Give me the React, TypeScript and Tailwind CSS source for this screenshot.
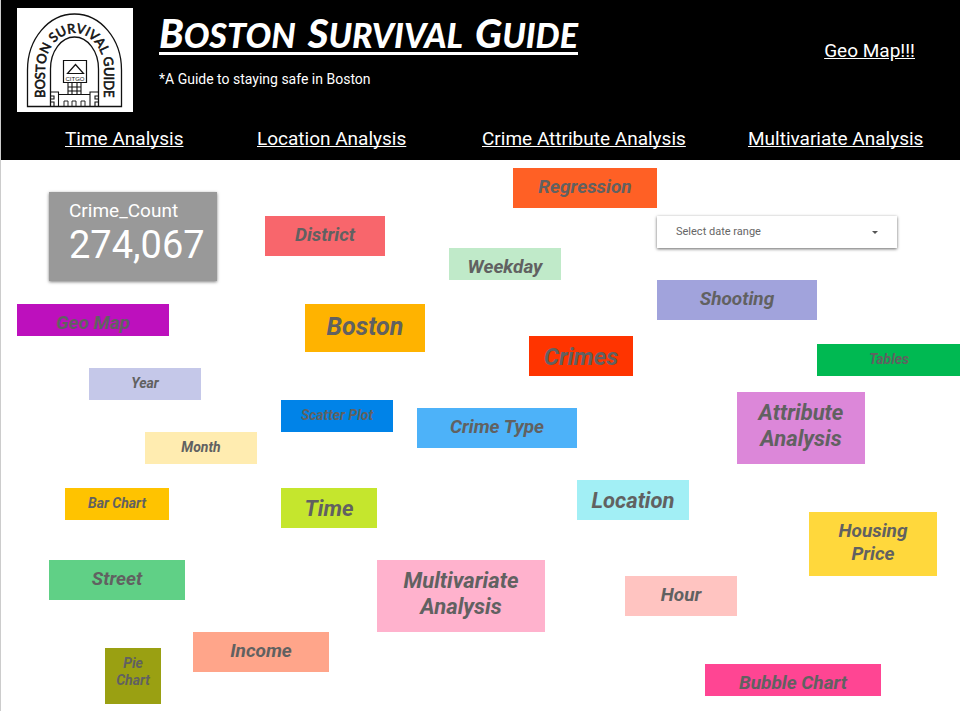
import React from "react";

type Tag = { label: string; box: string; text: string };

const sm = "pt-[7px] text-[14px] leading-[17px]";
const md = "pt-[7px] text-[19px] leading-[23px]";
const lg = "pt-2 text-[22px] leading-[26px]";
const xl = "pt-2 text-[25px] leading-[29px]";

const tags: Tag[] = [
  { label: "Regression", box: "left-128 top-2 w-36 h-10 bg-[#ff6025]", text: md },
  { label: "District", box: "left-66 top-14 w-30 h-10 bg-[#f8666c]", text: md },
  { label: "Weekday", box: "left-112 top-22 w-28 h-8 bg-[#c0eac9]", text: md },
  { label: "Shooting", box: "left-164 top-30 w-40 h-10 bg-[#a1a3dc]", text: md },
  { label: "Geo Map", box: "left-4 top-36 w-38 h-8 bg-[#bd10bd]", text: md },
  { label: "Boston", box: "left-76 top-36 w-30 h-12 bg-[#ffb300]", text: xl },
  { label: "Crimes", box: "left-132 top-44 w-26 h-10 bg-[#ff3400]", text: "pt-[7px] text-[24px] leading-[28px]" },
  { label: "Tables", box: "left-204 top-46 w-36 h-8 bg-[#00b952]", text: sm },
  { label: "Year", box: "left-22 top-52 w-28 h-8 bg-[#c5c8e9]", text: sm },
  { label: "Scatter Plot", box: "left-70 top-60 w-28 h-8 bg-[#0083e8]", text: sm },
  { label: "Crime Type", box: "left-104 top-62 w-40 h-10 bg-[#4db2f9]", text: md },
  { label: "Attribute Analysis", box: "left-184 top-58 w-32 h-18 bg-[#dc87d9]", text: lg },
  { label: "Month", box: "left-36 top-68 w-28 h-8 bg-[#ffecb0]", text: sm },
  { label: "Bar Chart", box: "left-16 top-82 w-26 h-8 bg-[#ffc300]", text: sm },
  { label: "Time", box: "left-70 top-82 w-24 h-10 bg-[#c5e62d]", text: lg },
  { label: "Location", box: "left-144 top-80 w-28 h-10 bg-[#a2eff5]", text: lg },
  { label: "Housing Price", box: "left-202 top-88 w-32 h-16 bg-[#ffd83c]", text: md },
  { label: "Street", box: "left-12 top-100 w-34 h-10 bg-[#60d086]", text: md },
  { label: "Multivariate Analysis", box: "left-94 top-100 w-42 h-18 bg-[#ffb2cd]", text: lg },
  { label: "Hour", box: "left-156 top-104 w-28 h-10 bg-[#ffc4c1]", text: md },
  { label: "Income", box: "left-48 top-118 w-34 h-10 bg-[#ffa58a]", text: md },
  { label: "Pie Chart", box: "left-26 top-122 w-14 h-14 bg-[#9aa012]", text: sm },
  { label: "Bubble Chart", box: "left-176 top-126 w-44 h-8 bg-[#ff4593]", text: md },
];

function Logo() {
  return (
    <svg
      viewBox="0 0 116 104"
      className="block h-[104px] w-[116px] shrink-0 bg-white"
      role="img"
      aria-label="Boston Survival Guide"
      fill="none"
      stroke="#111"
    >
      <defs>
        <path id="arch" d="M28 90V62A29.700 37 0 0 1 87.400 62V98" />
      </defs>
      <path d="M10.500 98.500V62A47 56 0 0 1 104.500 62V98.500Z" strokeWidth="1.300" />
      <path d="M33.500 98V61A24 32 0 0 1 81.500 61V98" strokeWidth="1.300" />
      <path d="M46.500 52.500h23v22h-23zM50.500 65.500l8-9 8 9z" strokeWidth="1.200" />
      <path d="M51 75v11M55 75v11M60 75v11M64 75v11M51 79h13M51 83h13" strokeWidth="1.100" />
      <path d="M33.500 84h8v14M42 86.500h31M73 98V84h8.500M34 88h3v3h-3M34 94h3v4M81 88h-3v3h3M81 94h-3v4" strokeWidth="1.100" />
      <path d="M47 98v-5h4v5M55 98v-5h4v5M64 98v-5h4v5" strokeWidth="0.900" />
      <text
        x="58"
        y="73"
        textAnchor="middle"
        fill="#111"
        stroke="none"
        className="font-['Liberation_Sans',sans-serif] text-[6px]"
      >
        CITGO
      </text>
      <text fill="#111" stroke="#111" strokeWidth="0.600" className="font-['Lato',sans-serif] text-[13px]">
        <textPath href="#arch">BOSTON SURVIVAL GUIDE</textPath>
      </text>
    </svg>
  );
}

export default function App() {
  return (
    <div className="min-h-screen overflow-hidden border-l border-[#ccc] bg-white font-['Roboto',sans-serif]">
      <header className="bg-black text-white">
        <div className="flex h-[120px] items-start pt-2 pl-4">
          <Logo />
          <div className="ml-[26px] flex-1">
            <h1 className="mt-2 flex h-[39px] w-fit items-end gap-3 border-b-[3px] border-white font-['Lato',sans-serif] text-[34px] leading-[34px] font-black whitespace-nowrap uppercase italic">
              <span className="block first-letter:text-[40px]">Boston</span>
              <span className="block first-letter:text-[40px]">Survival</span>
              <span className="block first-letter:text-[40px]">Guide</span>
            </h1>
            <p className="mt-[15px] text-[14px] leading-[18px]">*A Guide to staying safe in Boston</p>
          </div>
          <a href="#geo-map" className="mt-[31px] mr-[45px] text-[19px] leading-[24px] underline">
            Geo Map!!!
          </a>
        </div>
        <nav className="grid h-10 grid-cols-[192fr_225fr_266fr_212fr] pt-[7px] pl-16 text-[19px] leading-[24px] whitespace-nowrap">
          <a href="#time" className="underline [text-decoration-skip-ink:none] justify-self-start">Time Analysis</a>
          <a href="#location" className="underline [text-decoration-skip-ink:none] justify-self-start">Location Analysis</a>
          <a href="#attribute" className="underline [text-decoration-skip-ink:none] justify-self-start">Crime Attribute Analysis</a>
          <a href="#multivariate" className="underline [text-decoration-skip-ink:none] justify-self-start">Multivariate Analysis</a>
        </nav>
      </header>

      <main className="relative min-h-[551px]">
        <section className="absolute top-8 left-12 h-[89px] w-42 bg-[#999] pt-2 pl-5 text-white shadow-[0_1px_3px_rgba(0,0,0,0.5)]">
          <h2 className="text-[19px] leading-[22px]">Crime_Count</h2>
          <p className="text-[38px] leading-[46px]">274,067</p>
        </section>

        <button
          type="button"
          className="absolute top-14 left-164 flex h-8 w-60 items-center justify-between bg-white px-[19px] pt-px text-[11px] text-[#666] shadow-[0_1px_3px_rgba(0,0,0,0.6)]"
        >
          Select date range
          <svg viewBox="0 0 6 3" className="h-[3px] w-[6px]" fill="#555" aria-hidden="true">
            <path d="M0 0h6L3 3z" />
          </svg>
        </button>

        {tags.map((tag) => (
          <div
            key={tag.label}
            className={`absolute px-2 text-center font-bold text-[#616161] italic ${tag.box} ${tag.text}`}
          >
            {tag.label}
          </div>
        ))}
      </main>
    </div>
  );
}
